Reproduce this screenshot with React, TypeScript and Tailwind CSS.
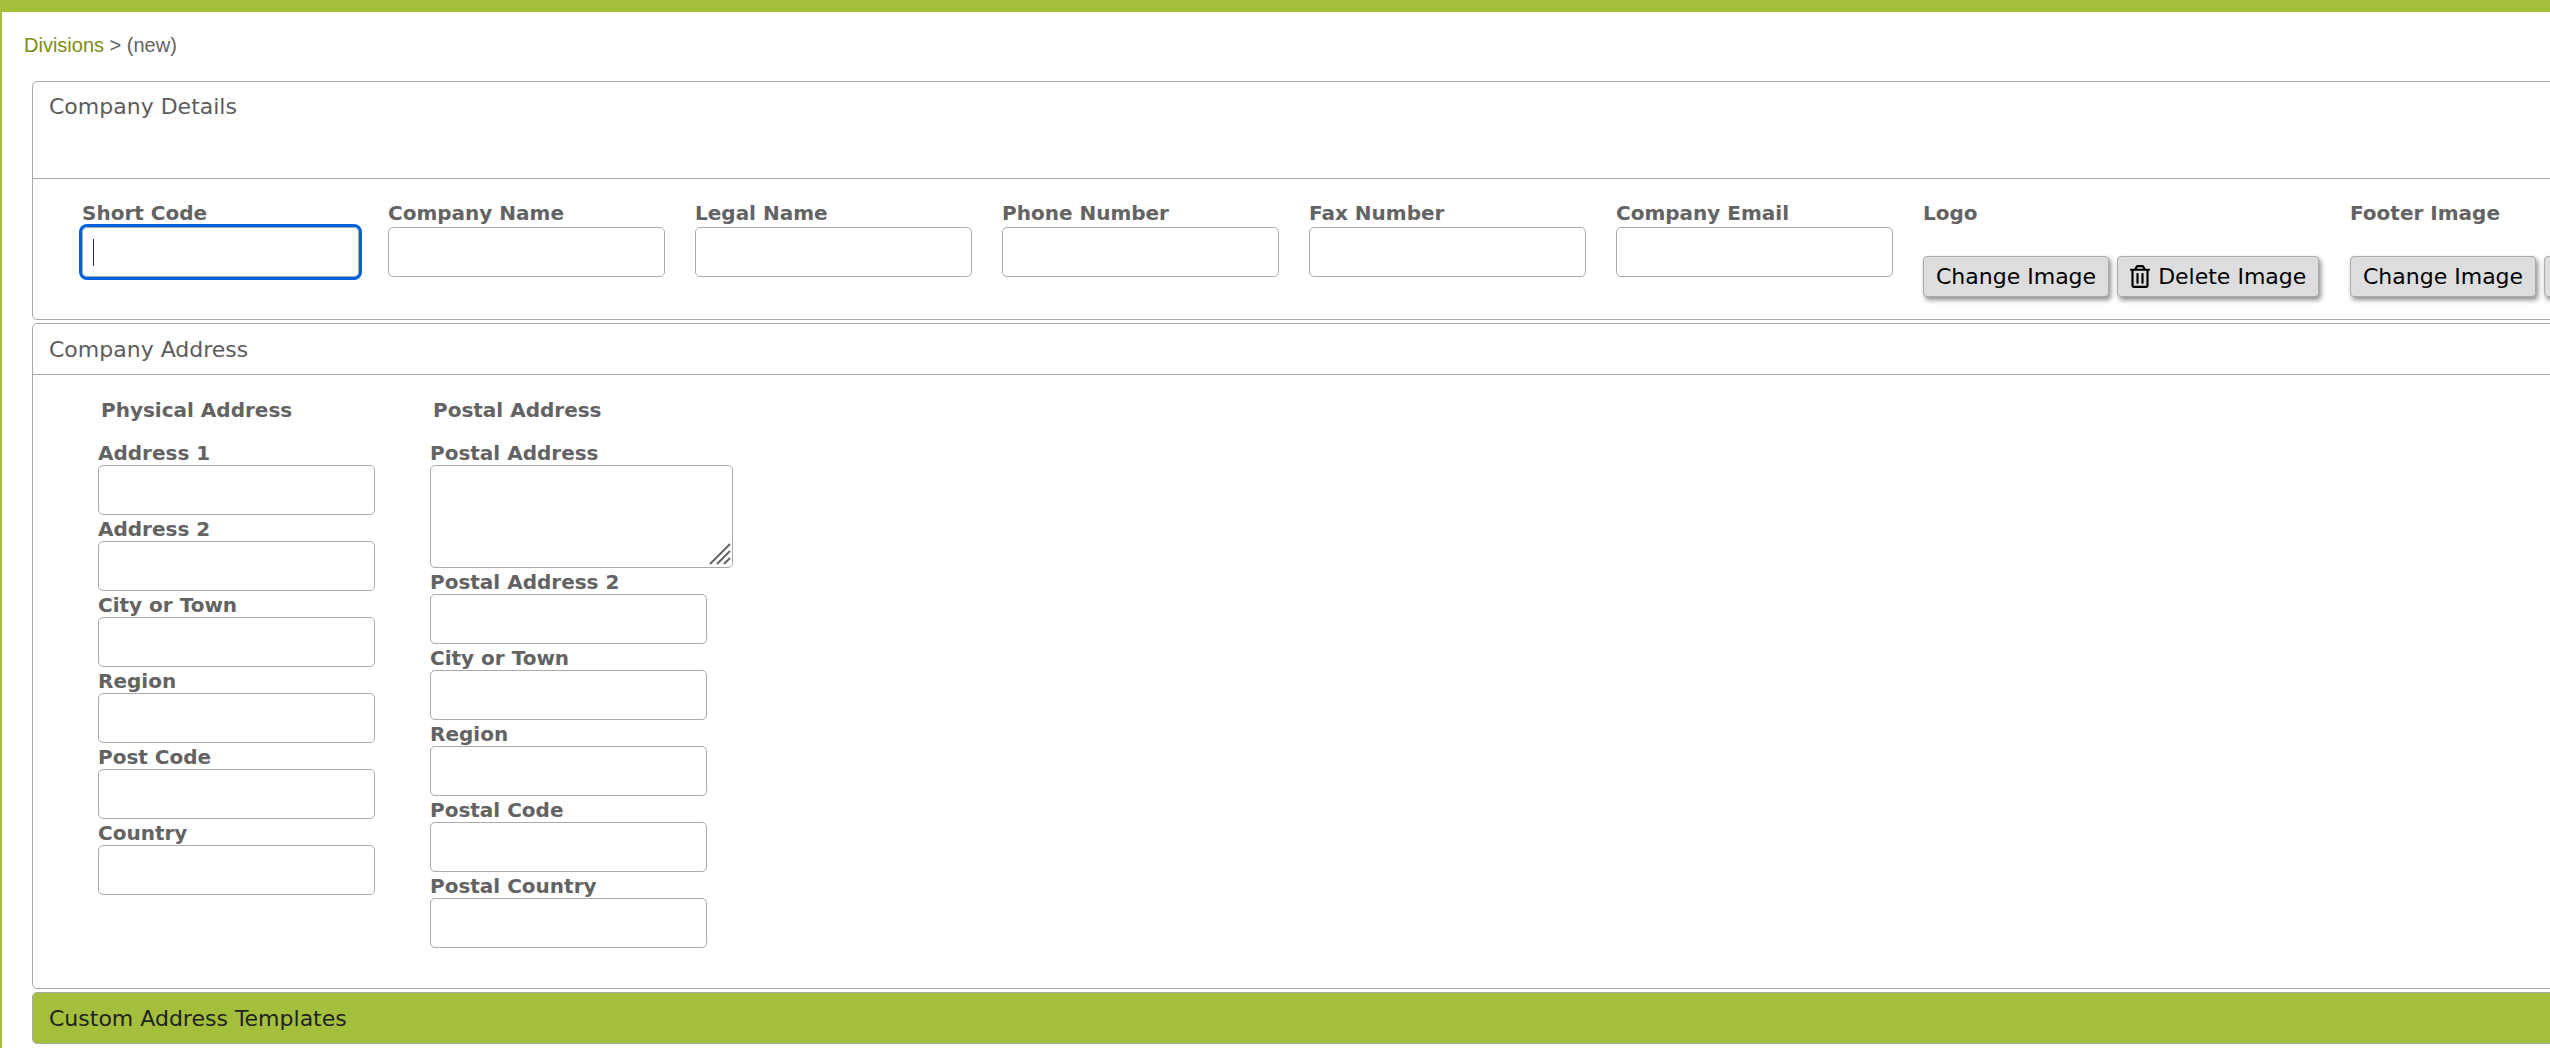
import React from 'react';
import { FaRegTrashAlt } from 'react-icons/fa';

function Field({ label }: { label: string }) {
  return (
    <div>
      <label className="block pb-[3px] text-[20px] leading-[17px] font-bold text-[#636363]">{label}</label>
      <input className="block h-[50px] w-[277px] rounded-[5px] border border-[#aaaaaa] bg-white" />
    </div>
  );
}

function ImageButton({ label, trash }: { label: string; trash?: boolean }) {
  return (
    <button className="flex h-[41px] shrink-0 items-center gap-[8px] rounded-[4px] border border-[#aaaaaa] bg-[#dddddd] px-[12px] text-[22px] whitespace-nowrap text-black shadow-[2px_3px_5px_rgba(0,0,0,0.45)]">
      {trash && <FaRegTrashAlt className="h-[23px] w-[20px]" />}
      {label}
    </button>
  );
}

const physical = ['Address 1', 'Address 2', 'City or Town', 'Region', 'Post Code', 'Country'];
const postal = ['City or Town', 'Region', 'Postal Code', 'Postal Country'];
const topFields = ['Company Name', 'Legal Name', 'Phone Number', 'Fax Number', 'Company Email'];

export default function App() {
  return (
    <div className="h-[1048px] w-[2550px] overflow-hidden border-t-[12px] border-l-2 border-[#a4bf3c] bg-white font-['DejaVu_Sans',sans-serif]">
      <div className="pt-[23px] pl-[22px] font-['Liberation_Sans',sans-serif] text-[20px] leading-[20px] text-[#636363]">
        <a className="text-[#7d8c14]">Divisions</a> &gt; (new)
      </div>

      <div className="mt-[26px] ml-[30px] w-[2700px]">
        <section className="rounded-[5px] border border-[#aaaaaa]">
          <div className="h-[97px] border-b border-[#aaaaaa] px-4 pt-[14px] text-[22px] leading-[22px] text-[#5c5c5c]">Company Details</div>
          <div className="flex h-[140px] pt-[25px] pl-[49px]">
            <div className="relative w-[306px] shrink-0">
              <label className="block pb-[4px] text-[20px] leading-[19px] font-bold text-[#636363]">Short Code</label>
              <input className="block h-[50px] w-[277px] rounded-[5px] border border-[#aaaaaa] bg-white outline-[3px] outline-[#0060df]" />
              <span className="absolute top-[35px] left-[11px] h-[27px] w-px bg-[#333333]" />
            </div>
            {topFields.map((f) => (
              <div key={f} className="w-[307px] shrink-0">
                <label className="block pb-[4px] text-[20px] leading-[19px] font-bold text-[#636363]">{f}</label>
                <input className="block h-[50px] w-[277px] rounded-[5px] border border-[#aaaaaa] bg-white" />
              </div>
            ))}
            <div className="w-[427px] shrink-0">
              <div className="text-[20px] leading-[19px] font-bold text-[#636363]">Logo</div>
              <div className="mt-[33px] flex gap-[8px]">
                <ImageButton label="Change Image" />
                <ImageButton label="Delete Image" trash />
              </div>
            </div>
            <div className="shrink-0">
              <div className="text-[20px] leading-[19px] font-bold text-[#636363]">Footer Image</div>
              <div className="mt-[33px] flex gap-[8px]">
                <ImageButton label="Change Image" />
                <ImageButton label="Delete Image" trash />
              </div>
            </div>
          </div>
        </section>

        <section className="mt-[3px] rounded-[5px] border border-[#aaaaaa]">
          <div className="h-[51px] border-b border-[#aaaaaa] px-4 pt-[15px] text-[22px] leading-[22px] text-[#5c5c5c]">Company Address</div>
          <div className="flex h-[613px] pt-[25px] pl-[65px]">
            <div className="w-[332px]">
              <h3 className="mb-[24px] pl-[3px] text-[20px] leading-[21px] font-bold text-[#636363]">Physical Address</h3>
              <div className="flex flex-col gap-[6px]">
                {physical.map((f) => <Field key={f} label={f} />)}
              </div>
            </div>
            <div>
              <h3 className="mb-[24px] pl-[3px] text-[20px] leading-[21px] font-bold text-[#636363]">Postal Address</h3>
              <div className="flex flex-col gap-[6px]">
                <div className="relative w-[303px]">
                  <label className="block pb-[3px] text-[20px] leading-[17px] font-bold text-[#636363]">Postal Address</label>
                  <textarea className="block h-[103px] w-[303px] resize-none rounded-[5px] border border-[#aaaaaa] bg-white" />
                  <svg className="absolute right-[2px] bottom-[3px] h-[22px] w-[22px]" viewBox="0 0 22 22" stroke="#666666" strokeWidth="2">
                    <path d="M1 21 L21 1 M8 21 L21 8 M15 21 L21 15" />
                  </svg>
                </div>
                <Field label="Postal Address 2" />
                {postal.map((f) => <Field key={f} label={f} />)}
              </div>
            </div>
          </div>
        </section>

        <section className="mt-[3px] h-[52px] rounded-[5px] border border-[#aaaaaa] bg-[#a4bf3c] px-4 pt-[15px] text-[22px] leading-[22px] text-[#222222]">
          Custom Address Templates
        </section>
      </div>
    </div>
  );
}
